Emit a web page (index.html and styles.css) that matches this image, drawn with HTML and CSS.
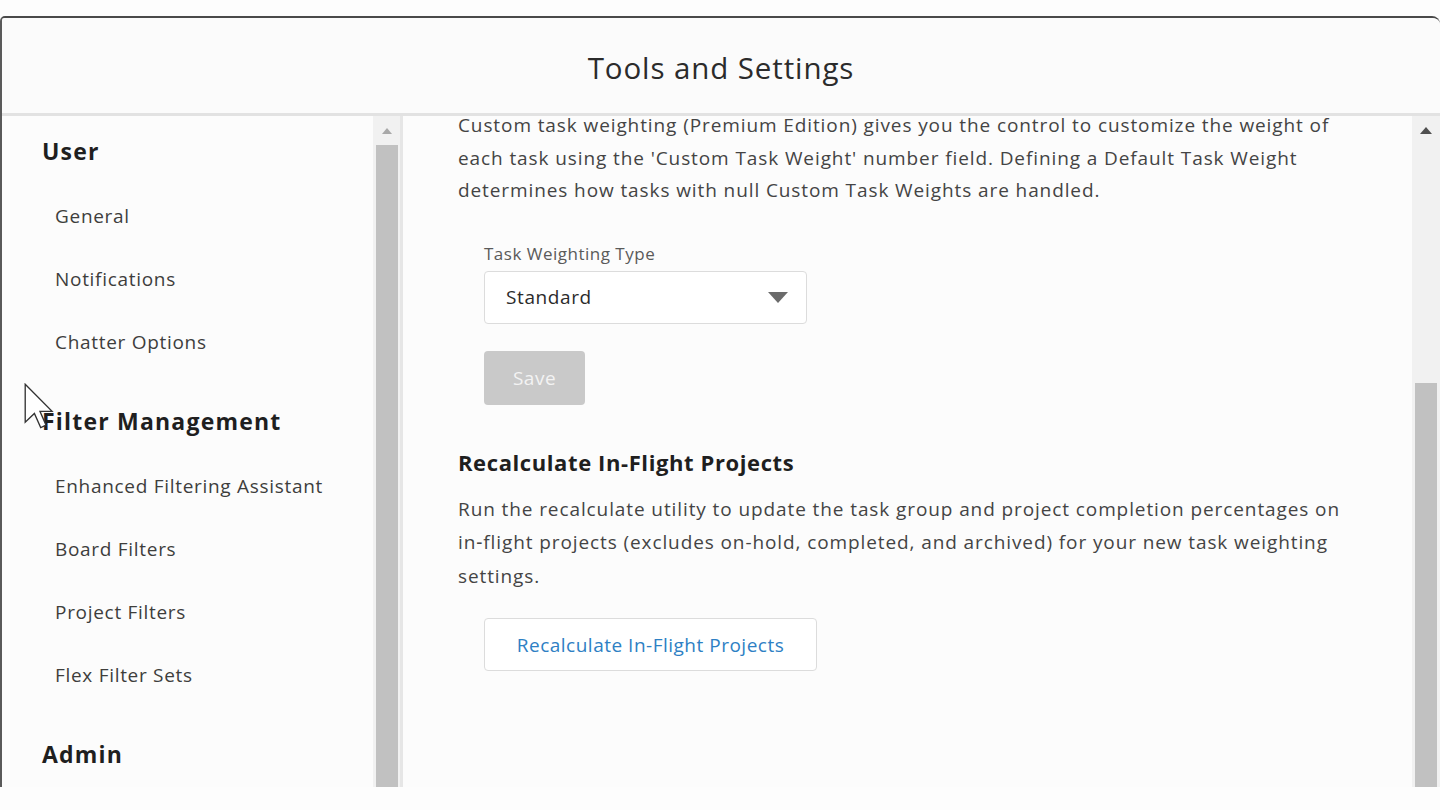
FILE: index.html
```html
<!DOCTYPE html>
<html>
<head>
<meta charset="utf-8">
<title>Tools and Settings</title>
<link rel="stylesheet" href="styles.css">
</head>
<body>
<div class="modal">
  <header class="modal-header">
    <h1 class="modal-title">Tools and Settings</h1>
  </header>
  <div class="modal-body">
    <nav class="sidebar">
      <div class="nav-group">
        <div class="nav-heading">User</div>
        <div class="nav-item">General</div>
        <div class="nav-item">Notifications</div>
        <div class="nav-item">Chatter Options</div>
      </div>
      <div class="nav-group">
        <div class="nav-heading">Filter Management</div>
        <div class="nav-item">Enhanced Filtering Assistant</div>
        <div class="nav-item">Board Filters</div>
        <div class="nav-item">Project Filters</div>
        <div class="nav-item">Flex Filter Sets</div>
      </div>
      <div class="nav-group">
        <div class="nav-heading">Admin</div>
      </div>
    </nav>
    <div class="scrollbar scrollbar-left">
      <div class="scroll-arrow arrow-light"></div>
      <div class="scroll-thumb thumb-left"></div>
    </div>
    <div class="divider"></div>
    <main class="content">
      <p class="para para-top">Custom task weighting (Premium Edition) gives you the control to customize the weight of each task using the 'Custom Task Weight' number field. Defining a Default Task Weight determines how tasks with null Custom Task Weights are handled.</p>
      <div class="field">
        <label class="field-label">Task Weighting Type</label>
        <div class="select">
          <span class="select-value">Standard</span>
          <span class="select-caret"></span>
        </div>
        <button class="btn-save">Save</button>
      </div>
      <h2 class="section-title">Recalculate In-Flight Projects</h2>
      <p class="para para-second">Run the recalculate utility to update the task group and project completion percentages on in&#8209;flight projects (excludes on-hold, completed, and archived) for your new task weighting settings.</p>
      <div class="field">
        <button class="btn-outline">Recalculate In-Flight Projects</button>
      </div>
    </main>
    <div class="scrollbar scrollbar-right">
      <div class="scroll-arrow arrow-dark"></div>
      <div class="scroll-thumb thumb-right"></div>
    </div>
  </div>
  <svg class="cursor" width="30" height="46" viewBox="0 0 12.4 19" xmlns="http://www.w3.org/2000/svg">
    <path d="M0.5 0.5 L0.5 16.2 L4.3 12.6 L6.9 18.4 L9.1 17.4 L6.6 11.7 L11.6 11.7 Z" fill="#ffffff" stroke="#333333" stroke-width="0.55" stroke-linejoin="miter"/>
  </svg>
</div>
</body>
</html>
```
FILE: styles.css
```css
* { box-sizing: border-box; }
html, body {
  margin: 0;
  padding: 0;
  background: #fdfdfd;
  font-family: "Open Sans", "Noto Sans", sans-serif;
  color: #3e3e3c;
}
.modal {
  position: relative;
  margin-top: 16px;
  height: 771px;
  border-top: 2px solid #4a4a4a;
  border-left: 2px solid #5a5a5a;
  border-radius: 5px 8px 0 0;
  background: #fbfbfb;
  display: flex;
  flex-direction: column;
  overflow: hidden;
}
.modal-header {
  height: 98px;
  border-bottom: 3px solid #e2e2e2;
  display: flex;
  align-items: center;
  justify-content: center;
  background: #fbfbfb;
}
.modal-title {
  margin: 4px 0 0 0;
  font-size: 29.5px;
  font-weight: 400;
  color: #2b2b2b;
  letter-spacing: 0.9px;
}
.modal-body {
  flex: 1;
  display: flex;
  min-height: 0;
}
.sidebar {
  width: 371px;
  padding-top: 2px;
  background: #fcfcfc;
  overflow: hidden;
}
.nav-group { margin-bottom: 14px; }
.nav-heading {
  height: 67px;
  line-height: 67px;
  padding-left: 40px;
  font-size: 23px;
  font-weight: 700;
  letter-spacing: 1.2px;
  color: #1f1f1f;
}
.nav-item {
  height: 63px;
  line-height: 63px;
  padding-left: 53px;
  font-size: 19px;
  letter-spacing: 0.7px;
  color: #3e3e3c;
}
.scrollbar {
  display: flex;
  flex-direction: column;
  align-items: center;
  background: #f1f1f1;
}
.scrollbar-left {
  width: 27px;
  padding-top: 12px;
}
.scrollbar-right {
  width: 28px;
  padding-top: 11px;
}
.scroll-arrow {
  width: 0;
  height: 0;
  border-left: 5px solid transparent;
  border-right: 5px solid transparent;
}
.arrow-light { border-bottom: 6px solid #a8a8a8; }
.arrow-dark { border-bottom: 7px solid #505050; border-left-width: 6px; border-right-width: 6px; }
.scroll-thumb {
  background: #c1c1c1;
  flex: 1;
}
.thumb-left {
  width: 22px;
  margin-top: 11px;
}
.thumb-right {
  width: 22px;
  margin-top: 249px;
}
.divider {
  width: 3px;
  background: #e6e6e6;
}
.content {
  flex: 1;
  padding-left: 55px;
  background: #fcfcfc;
  overflow: hidden;
}
.para {
  margin: 0;
  font-size: 19px;
  letter-spacing: 0.9px;
  line-height: 32.5px;
  color: #444444;
  max-width: 885px;
}
.para-top { margin-top: -7px; }
.field {
  padding-left: 26px;
  display: flex;
  flex-direction: column;
  align-items: flex-start;
}
.field-label {
  margin-top: 36px;
  font-size: 17px;
  letter-spacing: 0.5px;
  line-height: 22px;
  color: #5a5a5a;
}
.select {
  margin-top: 6px;
  width: 323px;
  height: 53px;
  border: 1px solid #dcdcdc;
  border-radius: 4px;
  background: #ffffff;
  display: flex;
  align-items: center;
  justify-content: space-between;
  padding: 0 18px 0 21px;
}
.select-value {
  font-size: 19px;
  letter-spacing: 0.6px;
  color: #2b2b2b;
}
.select-caret {
  width: 0;
  height: 0;
  border-left: 10px solid transparent;
  border-right: 10px solid transparent;
  border-top: 11px solid #6b6b6b;
}
.btn-save {
  margin-top: 27px;
  width: 101px;
  height: 54px;
  border: none;
  border-radius: 4px;
  background: #c9c9c9;
  color: #f3f3f3;
  font-family: inherit;
  font-size: 19px;
  letter-spacing: 0.5px;
}
.section-title {
  margin: 42px 0 0 0;
  font-size: 22px;
  letter-spacing: 0.6px;
  line-height: 30px;
  font-weight: 700;
  color: #1f1f1f;
}
.para-second {
  margin-top: 16px;
  line-height: 33.5px;
}
.btn-outline {
  margin-top: 25px;
  width: 333px;
  height: 53px;
  border: 1px solid #dcdcdc;
  border-radius: 4px;
  background: #ffffff;
  color: #2e80c4;
  font-family: inherit;
  font-size: 19px;
  letter-spacing: 0.5px;
}
.cursor {
  position: absolute;
  left: 22px;
  top: 365px;
}
```
